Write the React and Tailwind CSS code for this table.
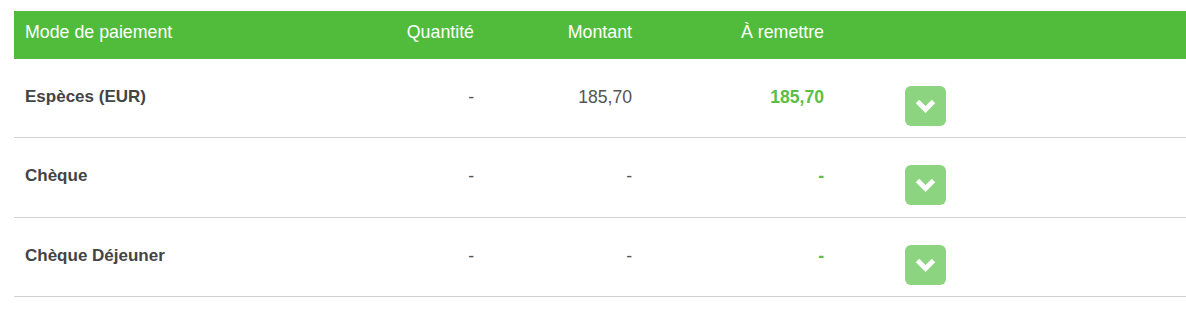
import React from "react";

const rows = [
  { label: "Espèces (EUR)", qty: "-", amount: "185,70", due: "185,70" },
  { label: "Chèque", qty: "-", amount: "-", due: "-" },
  { label: "Chèque Déjeuner", qty: "-", amount: "-", due: "-" },
];

const cols = "grid grid-cols-[316px_155px_158px_192px_1fr]";

const Chevron = () => (
  <svg width="21" height="15" viewBox="0 0 21 15" fill="none">
    <polyline points="2.5,2.5 10.5,10.5 18.5,2.5" stroke="white" strokeWidth="4.8" strokeLinejoin="miter" strokeLinecap="butt" />
  </svg>
);

const App = () => {
  return (
    <div className="w-[1186px] h-[323px] bg-white pt-[11px] pl-[14px] font-['Liberation_Sans',Arial,sans-serif] text-[17.6px]">
      <div className={`${cols} h-[48px] bg-[#51bc3c] text-white text-[17.8px] leading-[22px]`}>
        <div className="pl-[11px] pt-[10px]">Mode de paiement</div>
        <div className="pr-[11px] pt-[10px] text-right">Quantité</div>
        <div className="pr-[11px] pt-[10px] text-right">Montant</div>
        <div className="pr-[11px] pt-[10px] text-right">À remettre</div>
        <div />
      </div>

      {rows.map((r, i) => (
        <div key={r.label} className={`${cols} ${i === 1 ? "h-[80px]" : "h-[79px]"} border-b border-[#d2d2d2] leading-[22px]`}>
          <div className="pl-[11px] pt-[27px] text-[17px] font-bold text-[#444]">{r.label}</div>
          <div className="pr-[11px] pt-[27px] text-right text-[#555]">{r.qty}</div>
          <div className="pr-[11px] pt-[27px] text-right text-[#555]">{r.amount}</div>
          <div className="pr-[11px] pt-[27px] text-right font-bold text-[#5cbe49]">{r.due}</div>
          <div className="pl-[70px] pt-[27px]">
            <button type="button" className="flex h-[40px] w-[41px] items-center justify-center rounded-[6px] bg-[#8dd480]">
              <Chevron />
            </button>
          </div>
        </div>
      ))}
    </div>
  );
};

export default App;
